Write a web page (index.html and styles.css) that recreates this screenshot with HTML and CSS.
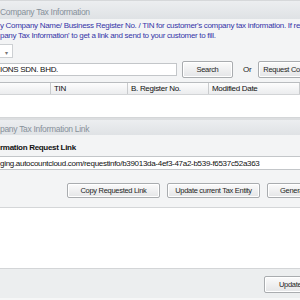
FILE: index.html
```html
<!DOCTYPE html>
<html lang="en">
<head>
  <meta charset="UTF-8" />
  <title>Company Tax Information</title>
  <link rel="stylesheet" href="styles.css">
</head>
<body>
  <div class="window">

    <section class="group">
      <div class="group-title">Company Tax Information</div>
      <div class="group-body">
        <p class="hint">y Company Name/ Business Register No. / TIN for customer's company tax information. If result not found, click</p>
        <p class="hint">pany Tax Information' to get a link and send to your customer to fill.</p>

        <div class="select"><span class="arrow">&#9662;</span></div>

        <div class="search-row">
          <div class="textbox name-box">IONS SDN. BHD.</div>
          <button class="btn search-btn">Search</button>
          <span class="or">Or</span>
          <button class="btn request-btn">Request Company Tax Information</button>
        </div>

        <div class="grid">
          <div class="grid-head">
            <div class="col"></div>
            <div class="col">TIN</div>
            <div class="col">B. Register No.</div>
            <div class="col">Modified Date</div>
          </div>
          <div class="grid-body"></div>
        </div>
      </div>
    </section>

    <section class="group">
      <div class="group-title">pany Tax Information Link</div>
      <div class="group-body link-body">
        <p class="label">rmation Request Link</p>
        <div class="textbox link-box">ging.autocountcloud.com/requestinfo/b39013da-4ef3-47a2-b539-f6537c52a363</div>
        <div class="button-row">
          <button class="btn wide-btn">Copy Requested Link</button>
          <button class="btn wide-btn">Update current Tax Entity</button>
          <button class="btn wide-btn generate-btn">Generate New Link</button>
        </div>
      </div>
    </section>

    <div class="blank"></div>

    <footer class="footer">
      <button class="btn update-btn">Update</button>
    </footer>

  </div>
</body>
</html>
```

FILE: styles.css
```css
/* Base */
* {
  box-sizing: border-box;
  margin: 0;
  padding: 0;
}

body {
  font-family: "Liberation Sans", Arial, sans-serif;
  font-size: 8px;
  letter-spacing: -0.3px;
  color: #111;
  background: #fff;
  overflow: hidden;
}

.window {
  display: flex;
  flex-direction: column;
  width: 300px;
  height: 300px;
  overflow: hidden;
}

/* Group boxes */
.group {
  background: #f3f4f5;
  border-bottom: 1px solid #d4d6d8;
}

.group-title {
  height: 19px;
  padding-top: 6px;
  line-height: 10px;
  font-size: 8.5px;
  color: #87909a;
  white-space: nowrap;
  background: linear-gradient(#eceef0, #dfe2e5);
  border-top: 1px solid #d6d8da;
}

.group + .group .group-title {
  height: 17px;
  padding-top: 4px;
  border-top: 2px solid #dcdee0;
}

.group-body {
  padding-top: 2px;
  overflow: hidden;
}

.hint {
  line-height: 9.5px;
  color: #3535a8;
  white-space: nowrap;
  overflow: hidden;
}

/* Inputs */
.select {
  width: 13px;
  height: 14px;
  margin-top: 4px;
  background: #fff;
  border: 1px solid #cdd0d3;
  border-left: none;
  display: flex;
  align-items: center;
  justify-content: center;
}

.arrow {
  font-size: 6px;
  color: #777;
  padding-top: 2px;
}

.textbox {
  background: #fff;
  border: 1px solid #c3c6c9;
  border-left: none;
  white-space: nowrap;
  overflow: hidden;
  display: flex;
  align-items: center;
}

.search-row {
  display: flex;
  align-items: center;
  height: 17px;
  margin-top: 3px;
  white-space: nowrap;
}

.name-box {
  width: 177px;
  height: 13px;
  flex-shrink: 0;
}

.or {
  margin: 0 7px 0 10px;
  color: #222;
}

/* Buttons */
.btn {
  font-family: inherit;
  font-size: 7.5px;
  letter-spacing: -0.3px;
  color: #1e1e1e;
  height: 17px;
  flex-shrink: 0;
  white-space: nowrap;
  background: linear-gradient(#fbfbfb, #e4e5e7);
  border: 1px solid #a9acaf;
  border-radius: 2px;
  box-shadow: inset 0 0 0 1px #fff;
}

.search-btn {
  width: 51px;
  margin-left: 5px;
}

.request-btn {
  padding: 0 4px;
  text-align: left;
}

/* Result grid */
.grid {
  margin-top: 4px;
}

.grid-head {
  display: grid;
  grid-template-columns: 51px 77px 81px 1fr;
  height: 13px;
  background: linear-gradient(#fdfdfd, #ebecee);
  border-top: 1px solid #b9bcbf;
  border-bottom: 1px solid #d2d4d6;
}

.col {
  padding-left: 3px;
  line-height: 11px;
  border-right: 1px solid #c9cbcd;
  white-space: nowrap;
}

.grid-body {
  height: 22px;
  background: #fff;
}

/* Link section */
.link-body {
  padding: 8px 0 9px;
}

.label {
  font-weight: bold;
  line-height: 10px;
  white-space: nowrap;
}

.link-box {
  height: 14px;
  margin-top: 3px;
  border-right: none;
}

.button-row {
  display: flex;
  gap: 7px;
  margin-top: 13px;
  padding-left: 67px;
}

.wide-btn {
  width: 93px;
  height: 15px;
}

.generate-btn {
  text-align: left;
  padding-left: 12px;
}

.blank {
  flex: 1;
  background: #fff;
}

/* Footer */
.footer {
  height: 32px;
  padding: 7px 0 0 264px;
  background: #eceeef;
  border-top: 1px solid #d3d5d7;
  border-bottom: 2px solid #f6f7f7;
  display: flex;
  align-items: flex-start;
  overflow: hidden;
}

.update-btn {
  width: 75px;
  padding-left: 14px;
  text-align: left;
}
```
